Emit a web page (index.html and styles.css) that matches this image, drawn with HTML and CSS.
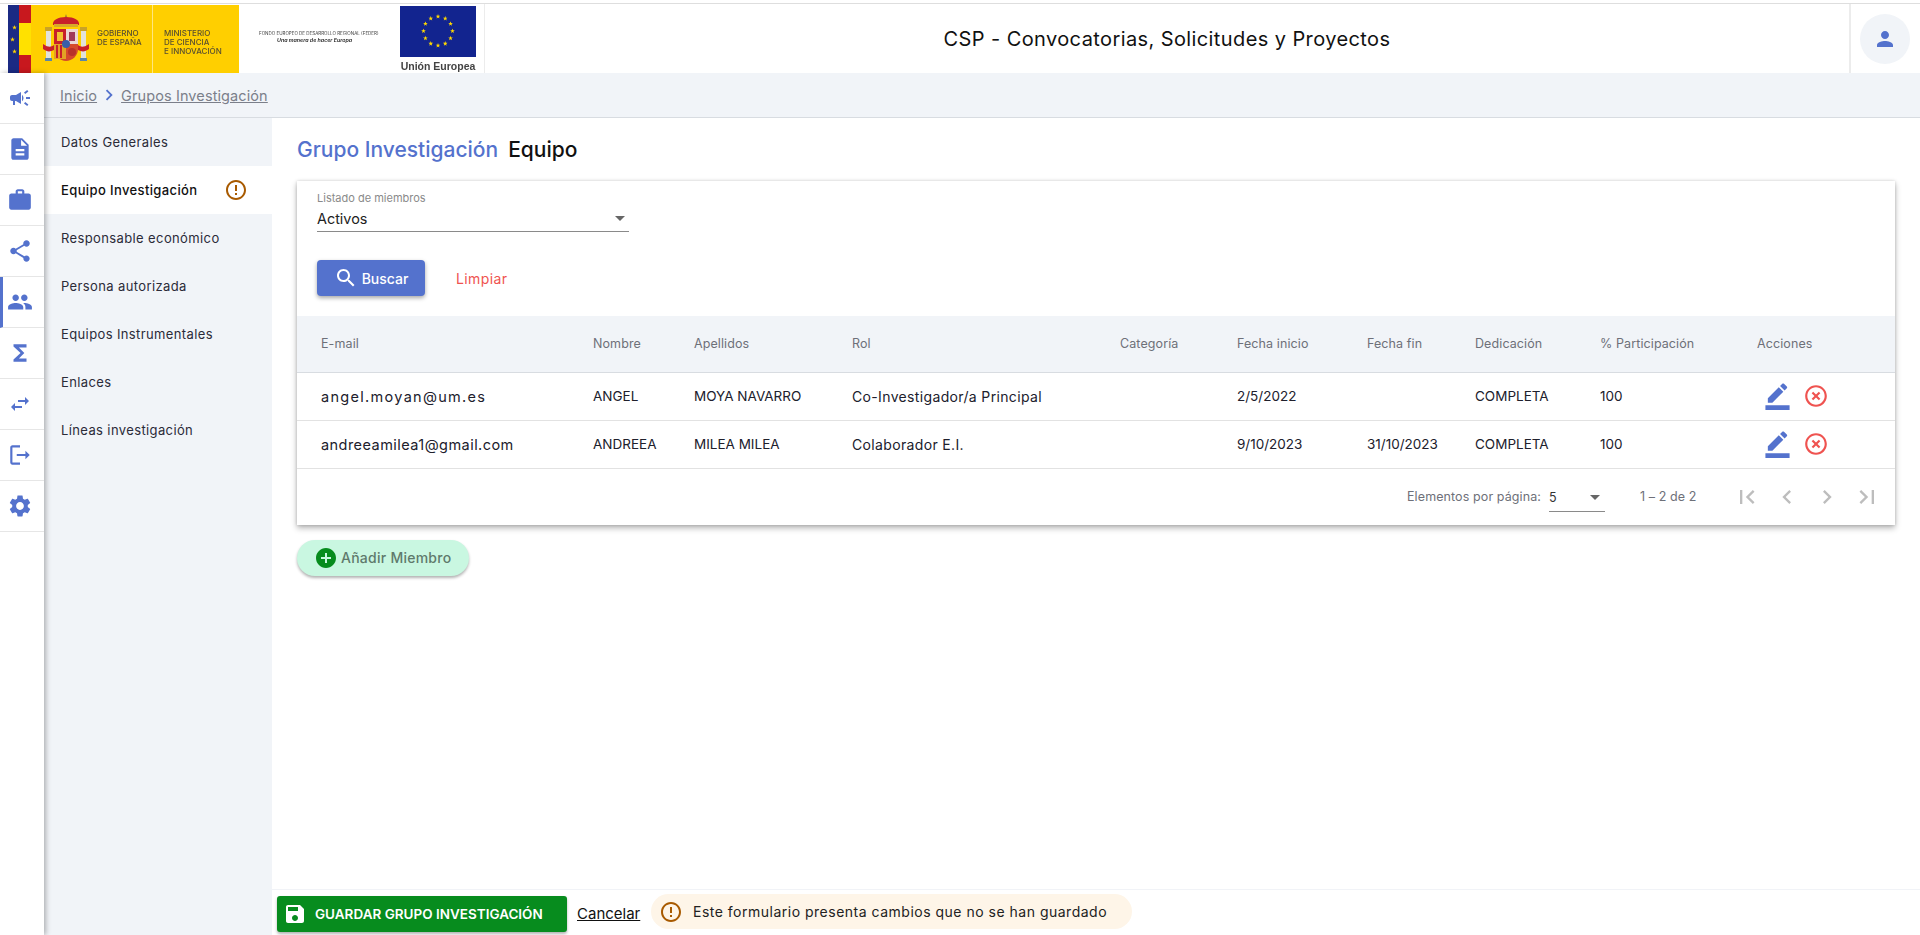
FILE: index.html
```html
<!DOCTYPE html>
<html lang="es">
<head>
<meta charset="utf-8">
<title>CSP - Convocatorias, Solicitudes y Proyectos</title>
<link rel="stylesheet" href="styles.css">
</head>
<body>
<svg class="sprite" aria-hidden="true">
  <symbol id="star" viewBox="0 0 10 10"><polygon points="5,0 6.200,3.400 9.800,3.500 6.900,5.700 7.900,9.200 5,7.200 2.100,9.200 3.100,5.700 .2,3.500 3.800,3.400"/></symbol>
  <symbol id="i-campaign" viewBox="0 0 24 24"><path d="M18 11v2h4v-2h-4zm-2 6.610c.96.71 2.210 1.650 3.200 2.390.4-.53.8-1.070 1.200-1.600-.99-.74-2.240-1.680-3.200-2.400-.4.54-.8 1.080-1.200 1.610zM20.400 5.600c-.4-.53-.8-1.070-1.200-1.600-.99.74-2.240 1.680-3.200 2.400.4.53.8 1.070 1.200 1.600.96-.72 2.210-1.650 3.200-2.400zM4 9c-1.100 0-2 .9-2 2v2c0 1.100.9 2 2 2h1v4h2v-4h1l5 3V6L8 9H4zm11.500 3c0-1.330-.58-2.530-1.500-3.350v6.690c.92-.81 1.500-2.010 1.500-3.340z"/></symbol>
  <symbol id="i-doc" viewBox="0 0 24 24"><path d="M14 2H6c-1.100 0-1.990.9-1.990 2L4 20c0 1.100.89 2 1.990 2H18c1.100 0 2-.9 2-2V8l-6-6zm2 16H8v-2h8v2zm0-4H8v-2h8v2zm-3-5V3.500L18.500 9H13z"/></symbol>
  <symbol id="i-work" viewBox="0 0 24 24"><path d="M20 6h-4V4c0-1.110-.89-2-2-2h-4c-1.110 0-2 .89-2 2v2H4c-1.110 0-1.990.89-1.990 2L2 19c0 1.110.89 2 2 2h16c1.110 0 2-.89 2-2V8c0-1.110-.89-2-2-2zm-6 0h-4V4h4v2z"/></symbol>
  <symbol id="i-share" viewBox="0 0 24 24"><path d="M18 16.080c-.76 0-1.440.3-1.960.77L8.910 12.700c.05-.23.09-.46.09-.7s-.04-.47-.09-.7l7.050-4.110c.54.5 1.250.81 2.040.81 1.660 0 3-1.340 3-3s-1.340-3-3-3-3 1.340-3 3c0 .24.04.47.09.7L8.040 9.810C7.500 9.310 6.790 9 6 9c-1.660 0-3 1.340-3 3s1.340 3 3 3c.79 0 1.500-.31 2.040-.81l7.120 4.160c-.05.21-.08.43-.08.65 0 1.610 1.310 2.920 2.920 2.920 1.610 0 2.920-1.310 2.920-2.920s-1.310-2.920-2.920-2.920z"/></symbol>
  <symbol id="i-people" viewBox="0 0 24 24"><path d="M16 11c1.660 0 2.990-1.340 2.990-3S17.660 5 16 5c-1.660 0-3 1.340-3 3s1.340 3 3 3zm-8 0c1.660 0 2.990-1.340 2.990-3S9.660 5 8 5C6.340 5 5 6.340 5 8s1.340 3 3 3zm0 2c-2.330 0-7 1.170-7 3.500V19h14v-2.500c0-2.330-4.670-3.500-7-3.500zm8 0c-.29 0-.62.02-.97.05 1.160.84 1.970 1.970 1.970 3.450V19h6v-2.500c0-2.330-4.670-3.500-7-3.500z"/></symbol>
  <symbol id="i-sigma" viewBox="0 0 24 24"><path d="M18 4H6v2l6.500 6L6 18v2h12v-3h-7l5-5-5-5h7z"/></symbol>
  <symbol id="i-compare" viewBox="0 0 24 24"><path d="M6.990 14H14v2H6.990v3L3 15l3.990-4v3zM17.010 10H10V8h7.010V5L21 9l-3.990 4v-3z"/></symbol>
  <symbol id="i-logout" viewBox="0 0 24 24"><path d="M5 5h7V3H5c-1.100 0-2 .9-2 2v14c0 1.100.9 2 2 2h7v-2H5V5zm16 7l-4-4v3H9v2h8v3l4-4z"/></symbol>
  <symbol id="i-settings" viewBox="0 0 24 24"><path d="M19.140 12.940c.04-.3.06-.61.06-.94 0-.32-.02-.64-.07-.94l2.030-1.580c.18-.14.23-.41.12-.61l-1.920-3.320c-.12-.22-.37-.29-.59-.22l-2.390.96c-.5-.38-1.030-.7-1.620-.94l-.36-2.540c-.04-.24-.24-.41-.48-.41h-3.840c-.24 0-.43.17-.47.41l-.36 2.540c-.59.24-1.130.57-1.620.94l-2.390-.96c-.22-.08-.47 0-.59.22L2.740 8.870c-.12.21-.08.47.12.61l2.030 1.580c-.05.3-.09.63-.09.94s.02.64.07.94l-2.030 1.580c-.18.14-.23.41-.12.61l1.920 3.320c.12.22.37.29.59.22l2.390-.96c.5.38 1.030.7 1.620.94l.36 2.540c.05.24.24.41.48.41h3.840c.24 0 .44-.17.47-.41l.36-2.540c.59-.24 1.130-.56 1.620-.94l2.390.96c.22.08.47 0 .59-.22l1.920-3.320c.12-.22.07-.47-.12-.61l-2.010-1.580zM12 15.600c-1.980 0-3.600-1.620-3.600-3.600s1.620-3.600 3.600-3.600 3.600 1.620 3.600 3.600-1.620 3.600-3.600 3.600z"/></symbol>
  <symbol id="i-person" viewBox="0 0 24 24"><path d="M12 12c2.210 0 4-1.790 4-4s-1.790-4-4-4-4 1.790-4 4 1.790 4 4 4zm0 2c-2.670 0-8 1.340-8 4v2h16v-2c0-2.660-5.330-4-8-4z"/></symbol>
  <symbol id="i-search" viewBox="0 0 24 24"><path d="M15.500 14h-.79l-.28-.27C15.410 12.590 16 11.110 16 9.500 16 5.910 13.090 3 9.500 3S3 5.910 3 9.500 5.910 16 9.500 16c1.610 0 3.090-.59 4.230-1.570l.27.28v.79l5 4.990L20.490 19l-4.990-5zm-6 0C7.010 14 5 11.990 5 9.500S7.010 5 9.500 5 14 7.010 14 9.500 11.990 14 9.500 14z"/></symbol>
  <symbol id="i-pencil" viewBox="0 0 24 24"><path d="M22 24H2v-4h20v4zM13.060 5.190l3.750 3.750L7.750 18H4v-3.750l9.060-9.060zm4.820 2.680-3.750-3.750 1.830-1.830c.39-.39 1.020-.39 1.410 0l2.340 2.340c.39.39.39 1.020 0 1.410l-1.830 1.830z"/></symbol>
  <symbol id="i-off" viewBox="0 0 24 24"><path d="M14.590 8L12 10.590 9.410 8 8 9.410 10.590 12 8 14.590 9.410 16 12 13.410 14.590 16 16 14.590 13.410 12 16 9.410 14.590 8zM12 2C6.470 2 2 6.470 2 12s4.470 10 10 10 10-4.470 10-10S17.530 2 12 2zm0 18c-4.410 0-8-3.590-8-8s3.590-8 8-8 8 3.590 8 8-3.590 8-8 8z"/></symbol>
  <symbol id="i-save" viewBox="0 0 24 24"><path d="M17 3H5c-1.110 0-2 .9-2 2v14c0 1.100.89 2 2 2h14c1.100 0 2-.9 2-2V7l-4-4zm-5 16c-1.660 0-3-1.340-3-3s1.340-3 3-3 3 1.340 3 3-1.340 3-3 3zm3-10H5V5h10v4z"/></symbol>
  <symbol id="i-add" viewBox="0 0 24 24"><path d="M12 2C6.480 2 2 6.480 2 12s4.480 10 10 10 10-4.480 10-10S17.520 2 12 2zm5 11h-4v4h-2v-4H7v-2h4V7h2v4h4v2z"/></symbol>
  <symbol id="i-warn" viewBox="0 0 24 24"><path d="M11 15h2v2h-2zm0-8h2v6h-2zm.99-5C6.470 2 2 6.480 2 12s4.470 10 9.990 10C17.520 22 22 17.520 22 12S17.520 2 11.990 2zM12 20c-4.420 0-8-3.580-8-8s3.580-8 8-8 8 3.580 8 8-3.580 8-8 8z"/></symbol>
  <symbol id="i-first" viewBox="0 0 24 24"><path d="M18.410 16.590L13.820 12l4.590-4.590L17 6l-6 6 6 6zM6 6h2v12H6z"/></symbol>
  <symbol id="i-prev" viewBox="0 0 24 24"><path d="M15.410 7.410L14 6l-6 6 6 6 1.410-1.410L10.830 12z"/></symbol>
  <symbol id="i-next" viewBox="0 0 24 24"><path d="M10 6L8.590 7.410 13.170 12l-4.580 4.590L10 18l6-6z"/></symbol>
  <symbol id="i-last" viewBox="0 0 24 24"><path d="M5.590 7.410L10.180 12l-4.590 4.590L7 18l6-6-6-6zM16 6h2v12h-2z"/></symbol>
</svg>

<header class="top">
  <svg class="logos" viewBox="0 0 484 69" width="484" height="69" role="img" aria-label="Gobierno de España, Unión Europea">
    <rect x="8" y="1" width="11" height="68" fill="#1b2a84"/>
    <rect x="19" y="1" width="12" height="68" fill="#c8181e"/>
    <rect x="19" y="19" width="12" height="32" fill="#ffe100"/>
    <g fill="#ffd400">
      <use href="#star" x="12" y="21" width="5" height="5"/>
      <use href="#star" x="10" y="33" width="5" height="5"/>
      <use href="#star" x="12" y="45" width="5" height="5"/>
    </g>
    <rect x="31" y="1" width="208" height="68" fill="#ffcf00"/>
    <rect x="152" y="1" width="1" height="68" fill="#ffe680"/>
    <g>
      <rect x="46" y="24" width="5" height="31" fill="#e2e2da"/>
      <rect x="81" y="24" width="5" height="31" fill="#e2e2da"/>
      <rect x="45" y="23" width="7" height="4" fill="#c9a227"/>
      <rect x="80" y="23" width="7" height="4" fill="#c9a227"/>
      <rect x="45" y="54" width="7" height="3" fill="#5b86a8"/>
      <rect x="80" y="54" width="7" height="3" fill="#5b86a8"/>
      <path d="M66 10l1.500 4h-3z" fill="#a8832a"/>
      <path d="M53 21c-1-5 5-8 13-8s14 3 13 8z" fill="#c8202a"/>
      <rect x="54" y="20" width="24" height="3" fill="#d7a92a"/>
      <path d="M43 40c6 4 8 3 11 1v5c-4 2-7 2-11-1zM89 40c-6 4-8 3-11 1v5c4 2 7 2 11-1z" fill="#c8202a"/>
      <path d="M54 25h24v20c0 7-6 12-12 12s-12-5-12-12z" fill="#d54a2c"/>
      <rect x="54" y="25" width="12" height="15" fill="#c8202a"/>
      <rect x="66" y="25" width="12" height="15" fill="#ead6d6"/>
      <path d="M57 28h6v9h-6z" fill="#f3c233"/>
      <path d="M69 28h6v9h-6z" fill="#a03a5a"/>
      <rect x="54" y="40" width="12" height="15" fill="#e3a324"/>
      <path d="M56 41h2v13h-2zM60 41h2v13h-2z" fill="#c8202a"/>
      <circle cx="66" cy="40" r="4" fill="#3a5fa8"/>
      <circle cx="72" cy="48" r="4" fill="#b8322a"/>
    </g>
    <g class="logo-dark">
      <text x="97" y="32">GOBIERNO</text>
      <text x="97" y="41">DE ESPAÑA</text>
      <text x="164" y="32">MINISTERIO</text>
      <text x="164" y="41">DE CIENCIA</text>
      <text x="164" y="50">E INNOVACIÓN</text>
    </g>
    <text class="logo-fondo" x="259" y="31">FONDO EUROPEO DE DESARROLLO REGIONAL (FEDER)</text>
    <text class="logo-lema" x="277" y="38">Una manera de hacer Europa</text>
    <rect x="400" y="2" width="76" height="51" fill="#12248f"/>
    <g fill="#ffd800">
      <use href="#star" x="435.500" y="10" width="5" height="5"/>
      <use href="#star" x="442.750" y="11.940" width="5" height="5"/>
      <use href="#star" x="448.060" y="17.250" width="5" height="5"/>
      <use href="#star" x="450" y="24.500" width="5" height="5"/>
      <use href="#star" x="448.060" y="31.750" width="5" height="5"/>
      <use href="#star" x="442.750" y="37.060" width="5" height="5"/>
      <use href="#star" x="435.500" y="39" width="5" height="5"/>
      <use href="#star" x="428.250" y="37.060" width="5" height="5"/>
      <use href="#star" x="422.940" y="31.750" width="5" height="5"/>
      <use href="#star" x="421" y="24.500" width="5" height="5"/>
      <use href="#star" x="422.940" y="17.250" width="5" height="5"/>
      <use href="#star" x="428.250" y="11.940" width="5" height="5"/>
    </g>
    <text class="logo-ue" x="438" y="66" text-anchor="middle">Unión Europea</text>
  </svg>
  <h1 class="app-title">CSP - Convocatorias, Solicitudes y Proyectos</h1>
  <div class="user-cell">
    <span class="avatar"><svg class="ico"><use href="#i-person"/></svg></span>
  </div>
</header>

<div class="shell">
  <nav class="rail">
    <a class="rail-item"><svg class="ico"><use href="#i-campaign"/></svg></a>
    <a class="rail-item"><svg class="ico ico-lg"><use href="#i-doc"/></svg></a>
    <a class="rail-item"><svg class="ico ico-lg"><use href="#i-work"/></svg></a>
    <a class="rail-item"><svg class="ico ico-lg"><use href="#i-share"/></svg></a>
    <a class="rail-item rail-active"><svg class="ico ico-lg"><use href="#i-people"/></svg></a>
    <a class="rail-item"><svg class="ico ico-lg"><use href="#i-sigma"/></svg></a>
    <a class="rail-item"><svg class="ico"><use href="#i-compare"/></svg></a>
    <a class="rail-item"><svg class="ico ico-lg"><use href="#i-logout"/></svg></a>
    <a class="rail-item"><svg class="ico ico-lg"><use href="#i-settings"/></svg></a>
  </nav>

  <div class="content">
    <div class="crumbs">
      <a class="crumb">Inicio</a>
      <svg class="ico crumb-sep"><use href="#i-next"/></svg>
      <a class="crumb">Grupos Investigación</a>
    </div>

    <div class="work">
      <aside class="side">
        <a class="side-item">Datos Generales</a>
        <a class="side-item side-active">Equipo Investigación <svg class="side-warn"><use href="#i-warn"/></svg></a>
        <a class="side-item">Responsable económico</a>
        <a class="side-item">Persona autorizada</a>
        <a class="side-item">Equipos Instrumentales</a>
        <a class="side-item">Enlaces</a>
        <a class="side-item">Líneas investigación</a>
      </aside>

      <div class="pane">
        <main class="pane-body">
          <h2 class="page-title"><span class="page-title-main">Grupo Investigación</span><span class="page-title-sub">Equipo</span></h2>

          <section class="card">
            <div class="filters">
              <div class="field">
                <label class="field-label">Listado de miembros</label>
                <div class="field-value"><span>Activos</span><i class="caret"></i></div>
              </div>
              <div class="filter-actions">
                <button class="btn-search"><svg class="ico"><use href="#i-search"/></svg>Buscar</button>
                <button class="btn-clear">Limpiar</button>
              </div>
            </div>

            <table class="grid">
              <colgroup>
                <col class="c-mail"><col class="c-nom"><col class="c-ape"><col class="c-rol"><col class="c-cat"><col class="c-ini"><col class="c-fin"><col class="c-ded"><col class="c-par"><col class="c-acc">
              </colgroup>
              <thead>
                <tr><th>E-mail</th><th>Nombre</th><th>Apellidos</th><th>Rol</th><th>Categoría</th><th>Fecha inicio</th><th>Fecha fin</th><th>Dedicación</th><th>% Participación</th><th>Acciones</th></tr>
              </thead>
              <tbody>
                <tr><td class="t-mail-short">angel.moyan@um.es</td><td>ANGEL</td><td>MOYA NAVARRO</td><td class="t-rol">Co-Investigador/a Principal</td><td></td><td>2/5/2022</td><td></td><td>COMPLETA</td><td>100</td>
                  <td><div class="acts"><svg class="act-edit"><use href="#i-pencil"/></svg><svg class="act-del"><use href="#i-off"/></svg></div></td></tr>
                <tr><td class="t-mail">andreeamilea1@gmail.com</td><td>ANDREEA</td><td>MILEA MILEA</td><td class="t-rol">Colaborador E.I.</td><td></td><td>9/10/2023</td><td>31/10/2023</td><td>COMPLETA</td><td>100</td>
                  <td><div class="acts"><svg class="act-edit"><use href="#i-pencil"/></svg><svg class="act-del"><use href="#i-off"/></svg></div></td></tr>
              </tbody>
            </table>

            <div class="pager">
              <span class="pager-label">Elementos por página:</span>
              <div class="pager-size"><span>5</span><i class="caret"></i></div>
              <span class="pager-range">1 – 2 de 2</span>
              <div class="pager-nav">
                <svg class="ico pager-ico"><use href="#i-first"/></svg>
                <svg class="ico pager-ico"><use href="#i-prev"/></svg>
                <svg class="ico pager-ico"><use href="#i-next"/></svg>
                <svg class="ico pager-ico"><use href="#i-last"/></svg>
              </div>
            </div>
          </section>

          <button class="btn-add"><svg class="btn-add-ico"><use href="#i-add"/></svg>Añadir Miembro</button>
        </main>

        <footer class="bar">
          <button class="btn-save"><svg class="ico"><use href="#i-save"/></svg>GUARDAR GRUPO INVESTIGACIÓN</button>
          <a class="cancel">Cancelar</a>
          <div class="notice"><svg class="ico notice-ico"><use href="#i-warn"/></svg>Este formulario presenta cambios que no se han guardado</div>
        </footer>
      </div>
    </div>
  </div>
</div>
</body>
</html>
```
FILE: styles.css
```css
* { box-sizing: border-box; }
html, body { height: 100%; }
body {
  margin: 0;
  display: flex;
  flex-direction: column;
  overflow: hidden;
  background: #fff;
  color: #1f1f2b;
  font-family: Inter, "Noto Sans", sans-serif;
  font-size: 14px;
}
.sprite { display: none; }
.ico { width: 24px; height: 24px; fill: currentColor; flex: none; display: block; }
.ico-lg { width: 26px; height: 26px; }

/* Header */
.top {
  flex: none;
  height: 70px;
  margin-top: 3px;
  border-top: 1px solid #dedede;
  display: flex;
  align-items: stretch;
  background: #fff;
}
.logos { flex: none; display: block; filter: blur(.35px); }
.logo-dark text { font: 500 8px Inter, sans-serif; fill: #5a5030; }
.logo-fondo { font: 4.500px Inter, sans-serif; fill: #444; }
.logo-lema { font: italic 600 5.300px Inter, sans-serif; fill: #222; }
.logo-ue { font: 700 10.500px "Liberation Sans", sans-serif; fill: #444; }
.app-title {
  flex: 1;
  margin: 0;
  border-left: 1px solid #ececec;
  align-self: stretch;
  display: flex;
  align-items: center;
  justify-content: center;
  font-size: 20px;
  font-weight: 400;
  letter-spacing: .4px;
  color: #111;
}
.user-cell {
  flex: none;
  width: 71px;
  border-left: 2px solid #ececec;
  display: flex;
  align-items: center;
  justify-content: center;
  padding-right: 1px;
}
.avatar {
  width: 50px;
  height: 50px;
  border-radius: 50%;
  background: #f1f4f8;
  color: #5472cd;
  display: flex;
  align-items: center;
  justify-content: center;
}

/* Shell */
.shell { flex: 1; min-height: 0; display: flex; }
.rail {
  flex: none;
  width: 44px;
  background: #fff;
  box-shadow: 2px 0 5px rgba(0, 0, 0, .28);
  position: relative;
  z-index: 2;
}
.rail-item {
  height: 51px;
  border-bottom: 1px solid #e6e6e6;
  display: flex;
  align-items: center;
  justify-content: center;
  color: #5472cd;
  padding-right: 4px;
}
.rail-active { border-left: 3px solid #5472cd; padding-right: 7px; }
.content { flex: 1; min-width: 0; display: flex; flex-direction: column; }
.crumbs {
  flex: none;
  height: 45px;
  padding: 0 16px;
  background: #f1f4f8;
  border-bottom: 1px solid #d8dce1;
  display: flex;
  align-items: center;
  gap: 1px;
}
.crumb { color: #7b7f8a; text-decoration: underline; font-size: 14.500px; letter-spacing: .1px; }
.crumb-sep { color: #5472cd; width: 22px; height: 22px; }
.work { flex: 1; min-height: 0; display: flex; }

/* Side menu */
.side { flex: none; width: 228px; background: #f1f4f8; }
.side-item {
  height: 48px;
  padding-left: 17px;
  display: flex;
  align-items: center;
  font-size: 13px;
  letter-spacing: .38px;
  color: #2b2b38;
}
.side-active { background: #fff; color: #111; font-weight: 500; }
.side-warn { width: 24px; height: 24px; fill: #a85a00; margin-left: auto; margin-right: 24px; }

/* Pane */
.pane { flex: 1; min-width: 0; display: flex; flex-direction: column; }
.pane-body { flex: 1; min-height: 0; padding: 17px 25px 0 25px; }
.page-title { margin: 0 0 17px; height: 29px; display: flex; align-items: center; gap: 10px; font-size: 21px; font-weight: 500; }
.page-title-main { color: #5472cd; }
.page-title-sub { color: #111; }
.card {
  background: #fff;
  box-shadow: 0 3px 6px rgba(0, 0, 0, .3), 0 0 3px rgba(0, 0, 0, .14);
}
.filters { height: 135px; padding: 10px 20px 0; }
.field { width: 312px; height: 41px; border-bottom: 1px solid #8a8a8a; }
.field-label { display: block; font-size: 11px; line-height: 14px; color: #8a8a8a; }
.field-value { display: flex; align-items: center; justify-content: space-between; font-size: 14.400px; height: 26px; padding-right: 4px; color: #222; }
.caret { width: 0; height: 0; border: 5px solid transparent; border-top-color: #666; border-bottom: 0; }
.filter-actions { margin-top: 28px; display: flex; align-items: center; gap: 31px; }
.btn-search {
  width: 108px;
  height: 36px;
  padding: 0;
  border: 0;
  border-radius: 4px;
  background: #5472cd;
  color: #fff;
  font: 500 14px Inter, sans-serif;
  box-shadow: 0 2px 4px rgba(0, 0, 0, .35);
  display: flex;
  align-items: center;
  justify-content: center;
  gap: 4px;
}
.btn-clear { padding: 0; border: 0; background: none; color: #ef5350; font: 14px Inter, sans-serif; letter-spacing: .4px; }

/* Table */
.grid { width: 100%; table-layout: fixed; border-collapse: collapse; }
.c-mail { width: 296px; }
.c-nom { width: 101px; }
.c-ape { width: 158px; }
.c-rol { width: 268px; }
.c-cat { width: 117px; }
.c-ini { width: 130px; }
.c-fin { width: 108px; }
.c-ded { width: 125px; }
.c-par { width: 157px; }
.c-acc { width: 138px; }
.grid th {
  height: 56px;
  padding: 0;
  background: #f1f4f8;
  border-bottom: 1px solid #d8dce1;
  text-align: left;
  font-size: 12.500px;
  font-weight: 400;
  letter-spacing: .1px;
  color: #6e7079;
}
.grid td {
  height: 48px;
  padding: 0;
  border-bottom: 1px solid #e2e2e2;
  font-size: 13.500px;
  color: #20202c;
}
.grid th:first-child, .grid td:first-child { padding-left: 24px; }
.grid .t-mail { font-size: 14.500px; letter-spacing: .45px; }
.grid .t-mail-short { font-size: 14.500px; letter-spacing: 1.300px; }
.grid .t-rol { font-size: 14px; letter-spacing: .35px; }
.acts { display: flex; align-items: center; gap: 11px; margin-left: 6px; }
.act-edit { width: 29px; height: 29px; fill: #5472cd; margin-top: -2px; }
.act-del { width: 26px; height: 26px; fill: #ef5350; }

/* Pager */
.pager { height: 56px; display: flex; align-items: center; padding-left: 1110px; color: #6e7079; font-size: 12.500px; letter-spacing: .1px; }
.pager-label { width: 142px; white-space: nowrap; }
.pager-size { width: 56px; height: 28px; margin-top: 3px; display: flex; align-items: center; justify-content: space-between; border-bottom: 1px solid #8a8a8a; padding: 0 5px 0 0; color: #333; }
.pager-range { margin-left: 35px; }
.pager-nav { margin-left: auto; margin-right: 14px; display: flex; gap: 12px; color: #bdbdbd; }
.pager-ico { width: 28px; height: 28px; }

/* Add button */
.btn-add {
  margin-top: 15px;
  width: 172px;
  height: 36px;
  padding: 0 0 0 17px;
  border: 0;
  border-radius: 18px;
  background: #c9f7e1;
  color: #5f7a6c;
  font: 500 14px Inter, sans-serif;
  letter-spacing: .25px;
  box-shadow: 0 2px 3px rgba(0, 0, 0, .3);
  display: flex;
  align-items: center;
  gap: 3px;
}
.btn-add-ico { width: 24px; height: 24px; fill: #078c1e; }

/* Footer */
.bar {
  flex: none;
  height: 46px;
  padding: 4px 0 0 5px;
  border-top: 1px solid #f1f3f7;
  display: flex;
  align-items: flex-start;
  background: #fff;
}
.btn-save {
  margin-top: 2px;
  width: 290px;
  height: 36px;
  padding: 0 0 0 6px;
  border: 0;
  border-radius: 3px;
  background: #078c1e;
  color: #fff;
  font: 600 13.500px Inter, sans-serif;
  box-shadow: 0 2px 3px rgba(0, 0, 0, .3);
  display: flex;
  align-items: center;
  gap: 8px;
}
.cancel { margin: 10px 0 0 10px; width: 65px; text-decoration: underline; color: #111; font-size: 15px; }
.notice {
  margin-left: 9px;
  width: 481px;
  height: 35px;
  padding-left: 8px;
  border-radius: 18px;
  background: #fef5e8;
  color: #222;
  font-size: 14px;
  letter-spacing: .5px;
  display: flex;
  align-items: center;
  gap: 10px;
}
.notice-ico { color: #a85a00; }
```
